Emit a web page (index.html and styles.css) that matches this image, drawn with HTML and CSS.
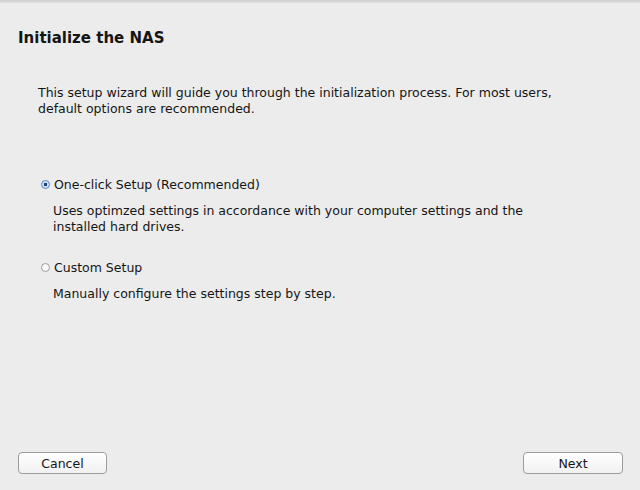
FILE: index.html
```html
<!DOCTYPE html>
<html>
<head>
<meta charset="utf-8">
<link rel="stylesheet" href="styles.css">
</head>
<body>
<div class="window">
  <div class="topline"></div>
  <h1 class="title">Initialize the NAS</h1>
  <p class="intro">This setup wizard will guide you through the initialization process. For most users, default options are recommended.</p>
  <div class="options">
    <div class="option">
      <label class="radio-row"><span class="radio checked"></span>One-click Setup (Recommended)</label>
      <p class="desc">Uses optimzed settings in accordance with your computer settings and the installed hard drives.</p>
    </div>
    <div class="option">
      <label class="radio-row"><span class="radio"></span>Custom Setup</label>
      <p class="desc">Manually configure the settings step by step.</p>
    </div>
  </div>
  <div class="footer">
    <button class="btn cancel">Cancel</button>
    <button class="btn next">Next</button>
  </div>
</div>
</body>
</html>
```
FILE: styles.css
```css
html, body {
  margin: 0;
  padding: 0;
}
body {
  background: #ececec;
  font-family: "DejaVu Sans", "Liberation Sans", sans-serif;
  color: #151515;
}
.window {
  width: 640px;
  height: 490px;
  display: flex;
  flex-direction: column;
  box-sizing: border-box;
}
.topline {
  height: 3px;
  background: linear-gradient(#cfcfcf, #e2e2e2);
}
.title {
  margin: 26px 0 0 18px;
  font-size: 15px;
  font-weight: bold;
  line-height: 18px;
  color: #141414;
}
.intro {
  margin: 38px 0 0 38px;
  width: 530px;
  font-size: 12.5px;
  line-height: 16px;
}
.options {
  margin: 59px 0 0 41px;
  display: flex;
  flex-direction: column;
  gap: 24px;
}
.radio-row {
  display: flex;
  align-items: center;
  gap: 4px;
  font-size: 12.5px;
  line-height: 17px;
}
.radio {
  width: 7px;
  height: 7px;
  border-radius: 50%;
  border: 1px solid #9a9a9a;
  background: #fafafa;
}
.radio.checked {
  border-color: #5a86c0;
  background: radial-gradient(circle, #1c3f7a 0 1.6px, #cfe0f5 2px);
}
.desc {
  margin: 10px 0 0 12px;
  width: 490px;
  font-size: 12.5px;
  line-height: 16px;
}
.footer {
  margin-top: auto;
  padding: 0 17px 16px 18px;
  display: flex;
  justify-content: space-between;
}
.btn {
  height: 22px;
  border: 1px solid #9c9c9c;
  border-radius: 4px;
  background: linear-gradient(#ffffff, #f1f1f1);
  font-family: "DejaVu Sans", "Liberation Sans", sans-serif;
  font-size: 12.5px;
  color: #141414;
  padding: 0;
}
.cancel { width: 89px; }
.next { width: 100px; }
```
